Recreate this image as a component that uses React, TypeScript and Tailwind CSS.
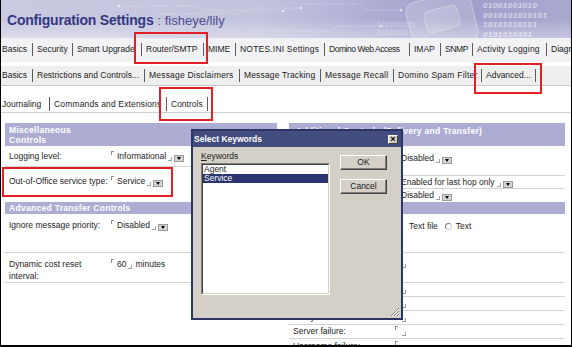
import React from 'react'

type Tab = { label: string; w: string; t?: string }

const row1: Tab[] = [
	{ label: 'Basics', w: 'w-[26px]' },
	{ label: 'Security', w: 'w-[31px]' },
	{ label: 'Smart Upgrade', w: 'w-[60px]' },
	{ label: 'Router/SMTP', w: 'w-[53px]' },
	{ label: 'MIME', w: 'w-[23px]' },
	{ label: 'NOTES.INI Settings', w: 'w-[80px]', t: 'tracking-[0.2px]' },
	{ label: 'Domino Web Access', w: 'w-[76px]', t: 'tracking-[-0.45px]' },
	{ label: 'IMAP', w: 'w-[22px]' },
	{ label: 'SNMP', w: 'w-[23px]', t: 'tracking-[-0.4px]' },
	{ label: 'Activity Logging', w: 'w-[65px]', t: 'tracking-[0.2px]' },
	{ label: 'Diagnostics', w: 'w-[60px]' }
]

const row2: Tab[] = [
	{ label: 'Basics', w: 'w-[26px]' },
	{ label: 'Restrictions and Controls...', w: 'w-[103px]' },
	{ label: 'Message Disclaimers', w: 'w-[86px]', t: 'tracking-[0.2px]' },
	{ label: 'Message Tracking', w: 'w-[72px]', t: 'tracking-[0.15px]' },
	{ label: 'Message Recall', w: 'w-[64px]', t: 'tracking-[0.2px]' },
	{ label: 'Domino Spam Filter', w: 'w-[79px]', t: 'tracking-[0.25px]' },
	{ label: 'Advanced...', w: 'w-[45px]' }
]

const row3: Tab[] = [
	{ label: 'Journaling', w: 'w-[43px]' },
	{ label: 'Commands and Extensions', w: 'w-[108px]', t: 'tracking-[0.15px]' },
	{ label: 'Controls', w: 'w-[32px]' }
]

function Sep({ h = 'h-[13px]' }: { h?: string }) {
	return <span className={`${h} w-px shrink-0 bg-[#5c5c5c]`} />
}

function TabRow({ tabs, trailing, sepH }: { tabs: Tab[]; trailing?: boolean; sepH?: string }) {
	return (
		<div className="flex items-center gap-[4px] pl-[1px]">
			{tabs.map((tab, i) => (
				<React.Fragment key={tab.label}>
					<span className={`${tab.w} ${tab.t ?? ''} shrink-0 whitespace-nowrap text-[8.5px] leading-[11px]`}>
						{tab.label}
					</span>
					{(i < tabs.length - 1 || trailing) && <Sep h={sepH} />}
				</React.Fragment>
			))}
		</div>
	)
}

function Dropdown() {
	return (
		<span className="ml-[2px] flex h-[7px] w-[10px] items-center justify-center self-end border border-[#9a9a9a] bg-[#d4d4d4]">
			<span className="h-0 w-0 border-x-[2.5px] border-t-[3px] border-x-transparent border-t-black" />
		</span>
	)
}

function Field({ v, dd, suffix }: { v?: string; dd?: boolean; suffix?: string }) {
	return (
		<div className="flex h-[11px] items-stretch">
			<span className="h-[4px] w-[3px] self-start border-l border-t border-[#8e8e8e]" />
			{v && <span className="ml-[3px] whitespace-nowrap leading-[11px]">{v}</span>}
			<span
				className={`${v ? 'ml-[2px]' : 'ml-[4px]'} mb-[1px] h-[4px] w-[4px] self-end border-b border-r border-[#a0a0a0]`}
			/>
			{dd && <Dropdown />}
			{suffix && <span className="ml-[3px] whitespace-nowrap leading-[11px]">{suffix}</span>}
		</div>
	)
}

function Radio() {
	return <span className="h-[7px] w-[7px] rounded-full border border-[#7c7c7c] border-r-[#d0d0d0] border-b-[#d0d0d0] bg-white" />
}

function Banner() {
	return (
		<div className="relative h-[38px] overflow-hidden bg-[linear-gradient(90deg,#c9c9e2_0%,#c3c3de_45%,#b2b2d7_62%,#9d9dc9_80%,#a9a9d0_100%)]">
			<div className="absolute inset-0 bg-[linear-gradient(180deg,rgba(255,255,255,0)_50%,rgba(255,255,255,0.35)_100%)]" />
			<svg className="absolute inset-0" width="570" height="38" viewBox="0 0 570 38" fill="none">
				<g stroke="#ffffff" strokeOpacity="0.55" strokeDasharray="1 2">
					<path d="M118 6H196L202 11H282" />
					<path d="M150 14H240L246 8H300" />
					<path d="M300 4H360L366 10H400" />
					<path d="M250 31H330L336 26H380" />
				</g>
				<g fill="#ffffff" fillOpacity="0.6">
					<circle cx="118" cy="6" r="1.3" />
					<circle cx="282" cy="11" r="1.3" />
					<circle cx="300" cy="8" r="1.3" />
					<circle cx="400" cy="10" r="1.3" />
					<circle cx="380" cy="26" r="1.3" />
				</g>
				<rect x="408" y="-4" width="66" height="52" rx="10" transform="rotate(-14 441 22)" fill="#ffffff" fillOpacity="0.18" stroke="#ffffff" strokeOpacity="0.35" />
				<rect x="424" y="8" width="34" height="22" rx="5" transform="rotate(-14 441 19)" fill="#ffffff" fillOpacity="0.15" stroke="#ffffff" strokeOpacity="0.3" />
			</svg>
			<div className="absolute left-[482px] top-[1px] text-[8px] font-bold italic leading-[9.5px] tracking-[0.5px] text-white/55">
				<div>01001001010</div>
				<div>0010101010101</div>
				<div>10101010101</div>
				<div>0101010101</div>
			</div>
			<div className="absolute left-[376px] top-[21px] text-[7px] italic leading-[8px] text-white/40">
				<div>0101001001</div>
				<div>01010101</div>
			</div>
			<div className="relative flex items-baseline pl-[6px] pt-[12px] leading-[16px]">
				<span className="text-[14px] font-bold tracking-[-0.2px] text-[#363680]">Configuration Settings</span>
				<span className="ml-[4px] text-[13px] text-[#4d4d8c]">: fisheye/lily</span>
			</div>
		</div>
	)
}

function Dialog() {
	return (
		<div className="absolute left-[190px] top-[129px] z-20 flex h-[191px] w-[212px] flex-col border-2 border-[#2d3567] bg-[#d4d0c8]">
			<div className="flex h-[16px] shrink-0 items-center justify-between bg-[#434c7e] pl-[1px] pr-[3px]">
				<span className="text-[8.5px] font-bold leading-[10px] text-white">Select Keywords</span>
				<span className="flex h-[9px] w-[10px] items-center justify-center border border-[#404040] border-l-white border-t-white bg-[#d4d0c8] text-[9px] font-bold leading-none text-black">
					×
				</span>
			</div>
			<div className="relative flex flex-1 pl-[8px]">
				<div className="flex flex-col">
					<span className="pt-[4px] text-[8.5px] leading-[10px]">
						<span className="underline">K</span>eywords
					</span>
					<div className="mt-[2px] h-[132px] w-[129px] border border-[#808080] border-b-white border-r-white">
						<div className="h-full border border-[#404040] border-b-[#d4d0c8] border-r-[#d4d0c8] bg-white text-[8.5px]">
							<div className="h-[9px] pl-[1px] leading-[9px]">Agent</div>
							<div className="h-[9px] bg-[#2b3470] pl-[1px] leading-[9px] text-white">Service</div>
						</div>
					</div>
				</div>
				<div className="ml-[10px] mt-[8px] flex flex-col gap-[9px]">
					<div className="flex h-[15px] w-[47px] items-center justify-center border border-[#404040] border-l-white border-t-white text-[8.5px] shadow-[inset_-1px_-1px_0_#808080]">
						OK
					</div>
					<div className="flex h-[15px] w-[47px] items-center justify-center border border-[#404040] border-l-white border-t-white text-[8.5px] shadow-[inset_-1px_-1px_0_#808080]">
						Cancel
					</div>
				</div>
				<svg className="absolute bottom-[1px] right-[1px]" width="10" height="10" viewBox="0 0 10 10">
					<g strokeWidth="1">
						<path d="M9 1L1 9M9 4L4 9M9 7L7 9" stroke="#808080" />
						<path d="M9 2L2 9M9 5L5 9M9 8L8 9" stroke="#ffffff" />
					</g>
				</svg>
			</div>
		</div>
	)
}

const header = 'bg-[#adadd4] text-[8.5px] font-bold tracking-[0.3px] text-white'
const line = 'border-b border-[#d2d2d2]'

export default function App() {
	return (
		<div className="relative h-[347px] w-[572px] overflow-hidden border-x border-b-2 border-black bg-white font-['Liberation_Sans',Arial,sans-serif] text-[8.5px] text-[#1c1c1c]">
			<Banner />

			<div className="flex h-[24px] items-center bg-[#f2f2f4] pb-[2px]">
				<TabRow tabs={row1} />
			</div>
			<div className="h-[4px]" />
			<div className="flex h-[20px] items-center border-b border-[#c8c8c8] bg-[#efefef]">
				<TabRow tabs={row2} trailing />
			</div>
			<div className="flex h-[27px] items-end border-b border-[#cfcfcf] pb-[1px]">
				<TabRow tabs={row3} trailing sepH="h-[14px]" />
			</div>

			<div className="flex pt-[10px]">
				<div className="ml-[4px] w-[272px]">
					<div className={`${header} h-[23px] pl-[4px] pt-[2px] leading-[10px]`}>
						Miscellaneous
						<br />
						Controls
					</div>
					<div className={`flex h-[21px] items-center ${line}`}>
						<div className="w-[106px] pl-[4px]">Logging level:</div>
						<Field v="Informational" dd />
					</div>
					<div className="flex h-[26px] items-center pt-[2px]">
						<div className="w-[106px] whitespace-nowrap pl-[4px]">Out-of-Office service type:</div>
						<Field v="Service" dd />
					</div>
					<div className="h-[9px]" />
					<div className={`${header} h-[12px] pl-[4px] leading-[12px]`}>Advanced Transfer Controls</div>
					<div className={`flex h-[39px] items-start pt-[6px] ${line}`}>
						<div className="w-[106px] pl-[4px] leading-[11px]">Ignore message priority:</div>
						<Field v="Disabled" dd />
					</div>
					<div className={`flex h-[30px] items-start pt-[5px] ${line}`}>
						<div className="w-[106px] pl-[4px] leading-[12px]">
							Dynamic cost reset
							<br />
							interval:
						</div>
						<div className="pt-[1px]">
							<Field v="60" suffix="minutes" />
						</div>
					</div>
				</div>

				<div className="ml-[12px] w-[276px]">
					<div className={`${header} h-[23px] whitespace-nowrap pl-[7px] pt-[3px] leading-[10px]`}>
						Additional Controls (Delivery and Transfer)
					</div>
					<div className={`flex h-[30px] items-start pt-[7px] ${line}`}>
						<div className="w-[106px] pl-[4px]">Transfer controls:</div>
						<Field v="Disabled" dd />
					</div>
					<div className={`flex h-[13px] items-center ${line}`}>
						<div className="w-[106px] pl-[4px]">Exact routing:</div>
						<Field v="Enabled for last hop only" dd />
					</div>
					<div className="flex h-[13px] items-center">
						<div className="w-[106px] pl-[4px]">Retry limit:</div>
						<Field v="Disabled" dd />
					</div>
					<div className={`${header} h-[12px] pl-[4px] leading-[12px]`}>Logging</div>
					<div className={`flex h-[39px] items-start pt-[7px] ${line}`}>
						<div className="w-[106px] pl-[4px]">Log format:</div>
						<div className="ml-[1px] flex items-center">
							<Radio />
							<span className="ml-[6px] leading-[11px]">Text file</span>
							<span className="ml-[7px] flex">
								<Radio />
							</span>
							<span className="ml-[4px] leading-[11px]">Text</span>
						</div>
					</div>
					<div className={`flex h-[30px] items-start pt-[5px] ${line}`}>
						<div className="w-[106px] pl-[4px]">Log path:</div>
						<Field />
					</div>
					<div className={`flex h-[14px] items-center ${line}`}>
						<div className="w-[106px] pl-[4px]">Hop count:</div>
						<Field />
					</div>
					<div className={`flex h-[14px] items-center ${line}`}>
						<div className="w-[106px] pl-[4px]">Timeout:</div>
						<Field />
					</div>
					<div className={`flex h-[14px] items-center ${line}`}>
						<div className="w-[106px] pl-[4px]">Delay:</div>
						<Field />
					</div>
					<div className={`flex h-[14px] items-center ${line}`}>
						<div className="w-[106px] pl-[4px]">Server failure:</div>
						<Field />
					</div>
					<div className="flex h-[14px] items-center">
						<div className="w-[106px] pl-[4px]">Username failure:</div>
						<Field />
					</div>
				</div>
			</div>

			<span className="absolute left-[133px] top-[32px] z-30 h-[32px] w-[74px] border-2 border-[#e31e24]" />
			<span className="absolute left-[473px] top-[63px] z-30 h-[31px] w-[68px] border-2 border-[#e31e24]" />
			<span className="absolute left-[158px] top-[87px] z-30 h-[34px] w-[54px] border-2 border-[#e31e24]" />
			<span className="absolute left-[1px] top-[167px] z-30 h-[30px] w-[171px] border-2 border-[#e31e24]" />

			<Dialog />
		</div>
	)
}
